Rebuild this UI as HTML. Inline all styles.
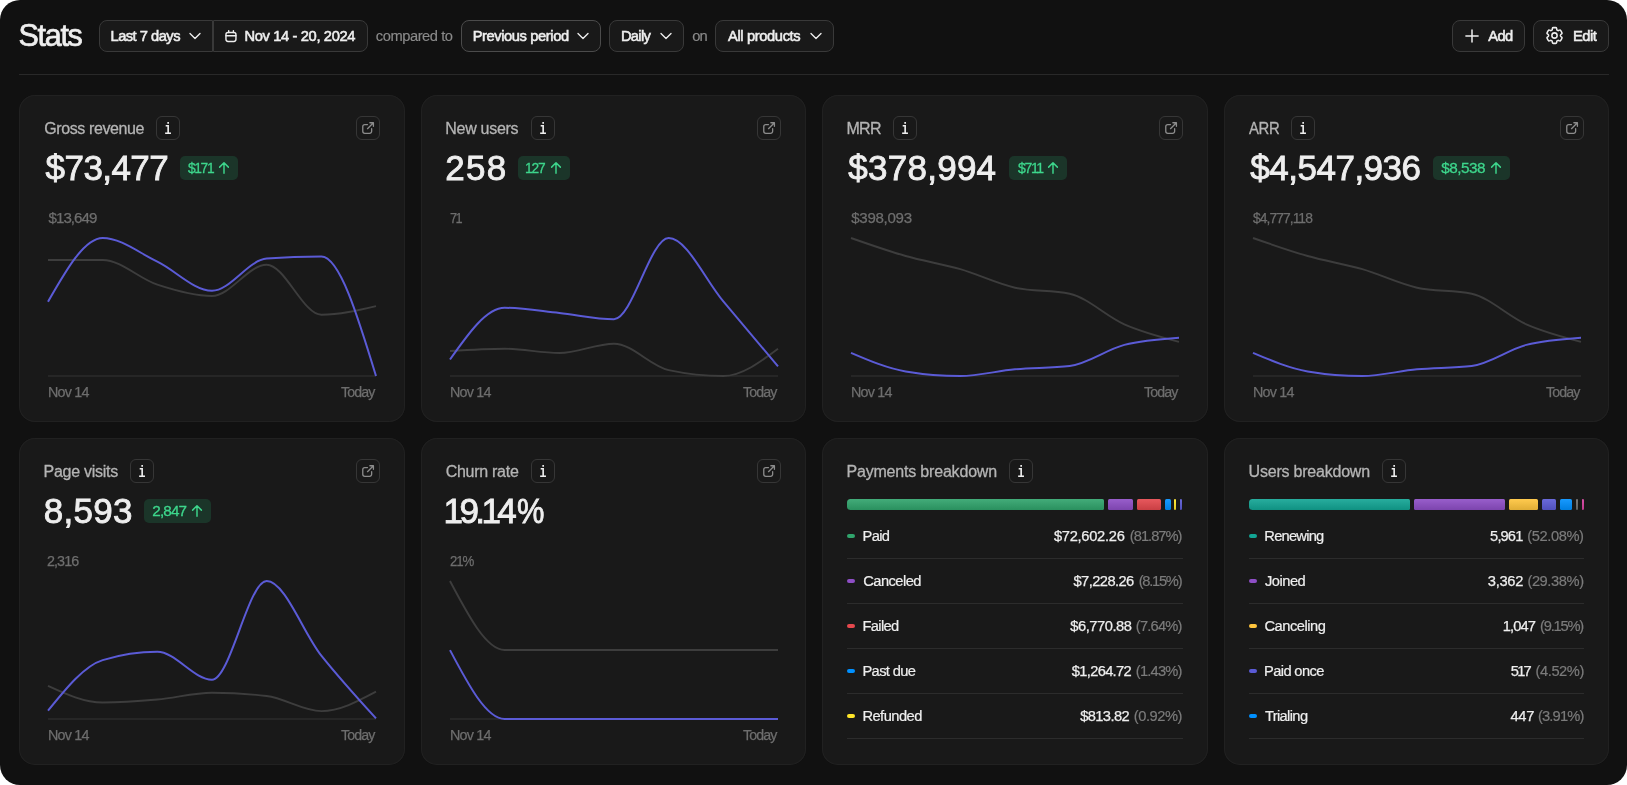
<!DOCTYPE html>
<html lang="en"><head><meta charset="utf-8"><title>Stats</title>
<style>
html,body{margin:0;padding:0;background:#fff;}
body{width:1627px;height:785px;overflow:hidden;font-family:"Liberation Sans", sans-serif;}
#app{will-change:transform;position:relative;width:1627px;height:785px;background:#111111;border-radius:20px;overflow:hidden;}
.t{position:absolute;white-space:nowrap;line-height:1;}
.i{position:absolute;overflow:visible;}
.b{position:absolute;box-sizing:border-box;background:#191919;border:1px solid #393939;}
.card{position:absolute;box-sizing:border-box;background:#191919;box-shadow:inset 0 0 0 1px #212121;border-radius:16px;}
.ib{position:absolute;box-sizing:border-box;width:24px;height:24px;border:1px solid #363636;border-radius:6px;text-align:center;}
.ib span{font-family:"Liberation Mono",monospace;font-weight:700;font-size:16px;line-height:22px;color:#eeeeee;display:block;position:relative;top:1.7px;transform:scaleX(0.72);}
.badge{position:absolute;height:24px;border-radius:5px;background:#1b3529;}
.seg{position:absolute;top:61px;height:11px;border-radius:2.5px;background-image:linear-gradient(rgba(255,255,255,.09),rgba(0,0,0,.12));}
.dot{position:absolute;left:25px;width:8px;height:4px;border-radius:2px;}
.sep{position:absolute;left:25px;right:25px;height:1px;background:#2c2c2c;}
</style></head>
<body><div id="app">
<div class="b" style="left:99px;top:20px;width:114px;height:32px;border-radius:8px 0 0 8px"></div><div class="b" style="left:213px;top:20px;width:155px;height:32px;border-radius:0 8px 8px 0"></div><svg class="i" style="left:187px;top:28px" width="16" height="16" viewBox="0 0 24 24" fill="none" stroke="#eeeeee" stroke-width="2" stroke-linecap="round" stroke-linejoin="round" ><path d="m19.5 8.25-7.5 7.5-7.5-7.5"/></svg><svg class="i" style="left:220px;top:26px" width="20" height="20" viewBox="0 0 20 20" fill="none" stroke="#eeeeee" stroke-width="1.4" stroke-linecap="round" stroke-linejoin="round" ><rect x="5.95" y="6.55" width="10" height="8.9" rx="2.1"/><path d="M8.7 4.6v2M13.4 4.6v2M5.95 9.8h10"/></svg><div class="b" style="left:461px;top:20px;width:140px;height:32px;border-radius:8px;border-color:#4b4b4b"></div><svg class="i" style="left:574.5px;top:28px" width="16" height="16" viewBox="0 0 24 24" fill="none" stroke="#eeeeee" stroke-width="2" stroke-linecap="round" stroke-linejoin="round" ><path d="m19.5 8.25-7.5 7.5-7.5-7.5"/></svg><div class="b" style="left:609px;top:20px;width:75px;height:32px;border-radius:8px"></div><svg class="i" style="left:657.5px;top:28px" width="16" height="16" viewBox="0 0 24 24" fill="none" stroke="#eeeeee" stroke-width="2" stroke-linecap="round" stroke-linejoin="round" ><path d="m19.5 8.25-7.5 7.5-7.5-7.5"/></svg><div class="b" style="left:715px;top:20px;width:119px;height:32px;border-radius:8px"></div><svg class="i" style="left:808px;top:28px" width="16" height="16" viewBox="0 0 24 24" fill="none" stroke="#eeeeee" stroke-width="2" stroke-linecap="round" stroke-linejoin="round" ><path d="m19.5 8.25-7.5 7.5-7.5-7.5"/></svg><div class="b" style="left:1452px;top:20px;width:73px;height:32px;border-radius:8px"></div><svg class="i" style="left:1461.9px;top:26px" width="20" height="20" viewBox="0 0 20 20" fill="none" stroke="#eeeeee" stroke-width="1.5" stroke-linecap="round" stroke-linejoin="round" ><path d="M3.9 10h12.2M10 3.9v12.2"/></svg><div class="b" style="left:1533px;top:20px;width:76px;height:32px;border-radius:8px"></div><svg class="i" style="left:1544.2px;top:25.0px" width="21" height="21" viewBox="0 0 24 24" fill="none" stroke="#eeeeee" stroke-width="1.75" stroke-linecap="round" stroke-linejoin="round" ><path d="M9.594 3.94c.09-.542.56-.94 1.11-.94h2.593c.55 0 1.02.398 1.11.94l.213 1.281c.063.374.313.686.645.87.074.04.147.083.22.127.325.196.72.257 1.075.124l1.217-.456a1.125 1.125 0 0 1 1.37.49l1.296 2.247a1.125 1.125 0 0 1-.26 1.431l-1.003.827c-.293.241-.438.613-.43.992a7.723 7.723 0 0 1 0 .255c-.008.378.137.75.43.991l1.004.827c.424.35.534.955.26 1.43l-1.298 2.247a1.125 1.125 0 0 1-1.369.491l-1.217-.456c-.355-.133-.75-.072-1.076.124a6.47 6.47 0 0 1-.22.128c-.331.183-.581.495-.644.869l-.213 1.281c-.09.543-.56.94-1.11.94h-2.594c-.55 0-1.019-.398-1.11-.94l-.213-1.281c-.062-.374-.312-.686-.644-.87a6.52 6.52 0 0 1-.22-.127c-.325-.196-.72-.257-1.076-.124l-1.217.456a1.125 1.125 0 0 1-1.369-.49l-1.297-2.247a1.125 1.125 0 0 1 .26-1.431l1.004-.827c.292-.24.437-.613.43-.991a6.932 6.932 0 0 1 0-.255c.007-.38-.138-.751-.43-.992l-1.004-.827a1.125 1.125 0 0 1-.26-1.43l1.297-2.247a1.125 1.125 0 0 1 1.37-.491l1.216.456c.356.133.751.072 1.076-.124.072-.044.146-.086.22-.128.332-.183.582-.495.644-.869l.214-1.28Z"/><path d="M15 12a3 3 0 1 1-6 0 3 3 0 0 1 6 0Z"/></svg><div style="position:absolute;left:19px;top:74px;width:1590px;height:1px;background:#292929"></div>
<div class="card" style="left:19px;top:95px;width:386px;height:327px"><div class="ib" style="left:137px;top:21px"><span>i</span></div><div class="ib" style="left:337px;top:21px"></div><svg class="i" style="left:341.9px;top:25.9px" width="14.2" height="14.2" viewBox="0 0 24 24" fill="none" stroke="#8c8c8c" stroke-width="2.2" stroke-linecap="round" stroke-linejoin="round" ><path d="M15 3h6v6M11 13 21 3M18 13v4.5a3.5 3.5 0 0 1-3.5 3.5h-8A3.5 3.5 0 0 1 3 17.5v-8A3.5 3.5 0 0 1 6.5 6H11"/></svg><div class="badge" style="left:161px;top:61px;width:58px"></div><svg class="i" style="left:197.97px;top:65.8px" width="14" height="14" viewBox="0 0 24 24" fill="none" stroke="#3dd68c" stroke-width="2.5" stroke-linecap="round" stroke-linejoin="round" ><path d="M4.5 10.5 12 3m0 0 7.5 7.5M12 3v18"/></svg><svg class="i" style="left:0;top:0" width="386" height="327" viewBox="0 0 386 327" fill="none"><line x1="29" y1="281" x2="357.00" y2="281" stroke="#2b2b2b" stroke-width="1.5"/><path d="M29.00,165.00C47.22,165.00,65.44,165.00,83.67,165.00C101.89,165.00,120.11,183.70,138.33,189.70C156.56,195.70,174.78,201.00,193.00,201.00C211.22,201.00,229.44,169.70,247.67,169.70C265.89,169.70,284.11,219.70,302.33,219.70C320.56,219.70,338.78,215.40,357.00,211.10" stroke="#3d3d3d" stroke-width="1.9"/><path d="M29.00,206.80C47.22,174.90,65.44,143.00,83.67,143.00C101.89,143.00,120.11,157.90,138.33,166.70C156.56,175.50,174.78,195.80,193.00,195.80C211.22,195.80,229.44,164.93,247.67,163.60C265.89,162.27,284.11,161.60,302.33,161.60C320.56,161.60,338.78,221.30,357.00,281.00" stroke="#5b5bd6" stroke-width="2"/></svg></div><div class="card" style="left:421px;top:95px;width:385px;height:327px"><div class="ib" style="left:110px;top:21px"><span>i</span></div><div class="ib" style="left:336px;top:21px"></div><svg class="i" style="left:340.9px;top:25.9px" width="14.2" height="14.2" viewBox="0 0 24 24" fill="none" stroke="#8c8c8c" stroke-width="2.2" stroke-linecap="round" stroke-linejoin="round" ><path d="M15 3h6v6M11 13 21 3M18 13v4.5a3.5 3.5 0 0 1-3.5 3.5h-8A3.5 3.5 0 0 1 3 17.5v-8A3.5 3.5 0 0 1 6.5 6H11"/></svg><div class="badge" style="left:97px;top:61px;width:52px"></div><svg class="i" style="left:127.97px;top:65.8px" width="14" height="14" viewBox="0 0 24 24" fill="none" stroke="#3dd68c" stroke-width="2.5" stroke-linecap="round" stroke-linejoin="round" ><path d="M4.5 10.5 12 3m0 0 7.5 7.5M12 3v18"/></svg><svg class="i" style="left:0;top:0" width="385" height="327" viewBox="0 0 385 327" fill="none"><line x1="29" y1="281" x2="357.00" y2="281" stroke="#2b2b2b" stroke-width="1.5"/><path d="M29.00,256.00C47.22,254.85,65.44,253.70,83.67,253.70C101.89,253.70,120.11,258.00,138.33,258.00C156.56,258.00,174.78,248.70,193.00,248.70C211.22,248.70,229.44,271.17,247.67,275.10C265.89,279.03,284.11,281.00,302.33,281.00C320.56,281.00,338.78,267.35,357.00,253.70" stroke="#3d3d3d" stroke-width="1.9"/><path d="M29.00,264.50C47.22,238.65,65.44,212.80,83.67,212.80C101.89,212.80,120.11,216.10,138.33,218.00C156.56,219.90,174.78,224.20,193.00,224.20C211.22,224.20,229.44,143.00,247.67,143.00C265.89,143.00,284.11,185.02,302.33,206.40C320.56,227.78,338.78,249.54,357.00,271.30" stroke="#5b5bd6" stroke-width="2"/></svg></div><div class="card" style="left:822px;top:95px;width:386px;height:327px"><div class="ib" style="left:71px;top:21px"><span>i</span></div><div class="ib" style="left:337px;top:21px"></div><svg class="i" style="left:341.9px;top:25.9px" width="14.2" height="14.2" viewBox="0 0 24 24" fill="none" stroke="#8c8c8c" stroke-width="2.2" stroke-linecap="round" stroke-linejoin="round" ><path d="M15 3h6v6M11 13 21 3M18 13v4.5a3.5 3.5 0 0 1-3.5 3.5h-8A3.5 3.5 0 0 1 3 17.5v-8A3.5 3.5 0 0 1 6.5 6H11"/></svg><div class="badge" style="left:187px;top:61px;width:58px"></div><svg class="i" style="left:223.97px;top:65.8px" width="14" height="14" viewBox="0 0 24 24" fill="none" stroke="#3dd68c" stroke-width="2.5" stroke-linecap="round" stroke-linejoin="round" ><path d="M4.5 10.5 12 3m0 0 7.5 7.5M12 3v18"/></svg><svg class="i" style="left:0;top:0" width="386" height="327" viewBox="0 0 386 327" fill="none"><line x1="29" y1="281" x2="357.00" y2="281" stroke="#2b2b2b" stroke-width="1.5"/><path d="M29.00,143.00C47.22,149.40,65.44,155.80,83.67,161.00C101.89,166.20,120.11,168.92,138.33,174.20C156.56,179.48,174.78,188.70,193.00,192.70C211.22,196.70,229.44,194.70,247.67,198.70C265.89,202.70,284.11,221.28,302.33,229.30C320.56,237.32,338.78,242.06,357.00,246.80" stroke="#3d3d3d" stroke-width="1.9"/><path d="M29.00,257.80C47.22,265.57,65.44,273.33,83.67,276.40C101.89,279.47,120.11,281.00,138.33,281.00C156.56,281.00,174.78,275.97,193.00,274.30C211.22,272.63,229.44,273.20,247.67,271.00C265.89,268.80,284.11,254.62,302.33,249.90C320.56,245.18,338.78,243.94,357.00,242.70" stroke="#5b5bd6" stroke-width="2"/></svg></div><div class="card" style="left:1224px;top:95px;width:385px;height:327px"><div class="ib" style="left:67px;top:21px"><span>i</span></div><div class="ib" style="left:336px;top:21px"></div><svg class="i" style="left:340.9px;top:25.9px" width="14.2" height="14.2" viewBox="0 0 24 24" fill="none" stroke="#8c8c8c" stroke-width="2.2" stroke-linecap="round" stroke-linejoin="round" ><path d="M15 3h6v6M11 13 21 3M18 13v4.5a3.5 3.5 0 0 1-3.5 3.5h-8A3.5 3.5 0 0 1 3 17.5v-8A3.5 3.5 0 0 1 6.5 6H11"/></svg><div class="badge" style="left:209px;top:61px;width:77px"></div><svg class="i" style="left:264.97px;top:65.8px" width="14" height="14" viewBox="0 0 24 24" fill="none" stroke="#3dd68c" stroke-width="2.5" stroke-linecap="round" stroke-linejoin="round" ><path d="M4.5 10.5 12 3m0 0 7.5 7.5M12 3v18"/></svg><svg class="i" style="left:0;top:0" width="385" height="327" viewBox="0 0 385 327" fill="none"><line x1="29" y1="281" x2="357.00" y2="281" stroke="#2b2b2b" stroke-width="1.5"/><path d="M29.00,143.00C47.22,149.40,65.44,155.80,83.67,161.00C101.89,166.20,120.11,168.92,138.33,174.20C156.56,179.48,174.78,188.70,193.00,192.70C211.22,196.70,229.44,194.70,247.67,198.70C265.89,202.70,284.11,221.28,302.33,229.30C320.56,237.32,338.78,242.06,357.00,246.80" stroke="#3d3d3d" stroke-width="1.9"/><path d="M29.00,257.80C47.22,265.57,65.44,273.33,83.67,276.40C101.89,279.47,120.11,281.00,138.33,281.00C156.56,281.00,174.78,275.97,193.00,274.30C211.22,272.63,229.44,273.20,247.67,271.00C265.89,268.80,284.11,254.62,302.33,249.90C320.56,245.18,338.78,243.94,357.00,242.70" stroke="#5b5bd6" stroke-width="2"/></svg></div><div class="card" style="left:19px;top:438px;width:386px;height:327px"><div class="ib" style="left:111px;top:21px"><span>i</span></div><div class="ib" style="left:337px;top:21px"></div><svg class="i" style="left:341.9px;top:25.9px" width="14.2" height="14.2" viewBox="0 0 24 24" fill="none" stroke="#8c8c8c" stroke-width="2.2" stroke-linecap="round" stroke-linejoin="round" ><path d="M15 3h6v6M11 13 21 3M18 13v4.5a3.5 3.5 0 0 1-3.5 3.5h-8A3.5 3.5 0 0 1 3 17.5v-8A3.5 3.5 0 0 1 6.5 6H11"/></svg><div class="badge" style="left:125px;top:61px;width:67px"></div><svg class="i" style="left:170.97px;top:65.8px" width="14" height="14" viewBox="0 0 24 24" fill="none" stroke="#3dd68c" stroke-width="2.5" stroke-linecap="round" stroke-linejoin="round" ><path d="M4.5 10.5 12 3m0 0 7.5 7.5M12 3v18"/></svg><svg class="i" style="left:0;top:0" width="386" height="327" viewBox="0 0 386 327" fill="none"><line x1="29" y1="281" x2="357.00" y2="281" stroke="#2b2b2b" stroke-width="1.5"/><path d="M29.00,247.80C47.22,256.15,65.44,264.50,83.67,264.50C101.89,264.50,120.11,263.13,138.33,261.50C156.56,259.87,174.78,254.70,193.00,254.70C211.22,254.70,229.44,255.80,247.67,258.00C265.89,260.20,284.11,273.10,302.33,273.10C320.56,273.10,338.78,263.40,357.00,253.70" stroke="#3d3d3d" stroke-width="1.9"/><path d="M29.00,272.70C47.22,250.17,65.44,227.63,83.67,222.10C101.89,216.57,120.11,213.80,138.33,213.80C156.56,213.80,174.78,241.70,193.00,241.70C211.22,241.70,229.44,143.00,247.67,143.00C265.89,143.00,284.11,194.70,302.33,217.60C320.56,240.50,338.78,260.45,357.00,280.40" stroke="#5b5bd6" stroke-width="2"/></svg></div><div class="card" style="left:421px;top:438px;width:385px;height:327px"><div class="ib" style="left:110px;top:21px"><span>i</span></div><div class="ib" style="left:336px;top:21px"></div><svg class="i" style="left:340.9px;top:25.9px" width="14.2" height="14.2" viewBox="0 0 24 24" fill="none" stroke="#8c8c8c" stroke-width="2.2" stroke-linecap="round" stroke-linejoin="round" ><path d="M15 3h6v6M11 13 21 3M18 13v4.5a3.5 3.5 0 0 1-3.5 3.5h-8A3.5 3.5 0 0 1 3 17.5v-8A3.5 3.5 0 0 1 6.5 6H11"/></svg><svg class="i" style="left:0;top:0" width="385" height="327" viewBox="0 0 385 327" fill="none"><line x1="29" y1="281" x2="357.00" y2="281" stroke="#2b2b2b" stroke-width="1.5"/><path d="M29.00,143.00C47.22,177.50,65.44,212.00,83.67,212.00C101.89,212.00,120.11,212.00,138.33,212.00C156.56,212.00,174.78,212.00,193.00,212.00C211.22,212.00,229.44,212.00,247.67,212.00C265.89,212.00,284.11,212.00,302.33,212.00C320.56,212.00,338.78,212.00,357.00,212.00" stroke="#3d3d3d" stroke-width="1.9"/><path d="M29.00,212.10C47.22,246.55,65.44,281.00,83.67,281.00C101.89,281.00,120.11,281.00,138.33,281.00C156.56,281.00,174.78,281.00,193.00,281.00C211.22,281.00,229.44,281.00,247.67,281.00C265.89,281.00,284.11,281.00,302.33,281.00C320.56,281.00,338.78,281.00,357.00,281.00" stroke="#5b5bd6" stroke-width="2"/></svg></div><div class="card" style="left:822px;top:438px;width:386px;height:327px"><div class="ib" style="left:187px;top:21px"><span>i</span></div><div class="seg" style="left:25px;width:257px;background-color:#30a46c;border-radius:3.5px 1.5px 1.5px 3.5px"></div><div class="seg" style="left:286px;width:25px;background-color:#8e4ec6;border-radius:1.5px"></div><div class="seg" style="left:315px;width:24px;background-color:#e5484d;border-radius:1.5px"></div><div class="seg" style="left:343px;width:5.5px;background-color:#0090ff;border-radius:1.5px"></div><div class="seg" style="left:351.5px;width:2.5px;background-color:#ffe629;border-radius:1.5px"></div><div class="seg" style="left:357.5px;width:2.5px;background-color:#5b5bd6;border-radius:1.5px 3px 3px 1.5px"></div><div class="dot" style="top:96px;background:#30a46c"></div><div class="sep" style="top:120px"></div><div class="dot" style="top:141px;background:#8e4ec6"></div><div class="sep" style="top:165px"></div><div class="dot" style="top:186px;background:#e5484d"></div><div class="sep" style="top:210px"></div><div class="dot" style="top:231px;background:#0090ff"></div><div class="sep" style="top:255px"></div><div class="dot" style="top:276px;background:#ffe629"></div><div class="sep" style="top:300px"></div></div><div class="card" style="left:1224px;top:438px;width:385px;height:327px"><div class="ib" style="left:158px;top:21px"><span>i</span></div><div class="seg" style="left:25px;width:161px;background-color:#12a594;border-radius:3.5px 1.5px 1.5px 3.5px"></div><div class="seg" style="left:190px;width:91px;background-color:#8e4ec6;border-radius:1.5px"></div><div class="seg" style="left:285px;width:29px;background-color:#ffc53d;border-radius:1.5px"></div><div class="seg" style="left:318px;width:14px;background-color:#5b5bd6;border-radius:1.5px"></div><div class="seg" style="left:336px;width:12px;background-color:#0090ff;border-radius:1.5px"></div><div class="seg" style="left:351.5px;width:2.5px;background-color:#6e6e6e;border-radius:1.5px"></div><div class="seg" style="left:357.5px;width:2.5px;background-color:#d6409f;border-radius:1.5px 3px 3px 1.5px"></div><div class="dot" style="top:96px;background:#12a594"></div><div class="sep" style="top:120px"></div><div class="dot" style="top:141px;background:#8e4ec6"></div><div class="sep" style="top:165px"></div><div class="dot" style="top:186px;background:#ffc53d"></div><div class="sep" style="top:210px"></div><div class="dot" style="top:231px;background:#5b5bd6"></div><div class="sep" style="top:255px"></div><div class="dot" style="top:276px;background:#0090ff"></div><div class="sep" style="top:300px"></div></div>
<div class="t" id="stats" style="left:18.57px;top:20px;font-size:30.5px;color:#eeeeee;letter-spacing:-1.302px;-webkit-text-stroke:0.7px #eeeeee;">Stats</div>
<div class="t" id="h_last" style="left:110.47px;top:29px;font-size:14.7px;color:#eeeeee;letter-spacing:-0.510px;-webkit-text-stroke:0.55px #eeeeee;">Last 7 days</div>
<div class="t" id="h_date" style="left:244.60px;top:29px;font-size:14.7px;color:#eeeeee;letter-spacing:-0.373px;-webkit-text-stroke:0.55px #eeeeee;">Nov 14 - 20, 2024</div>
<div class="t" id="h_cmp" style="left:375.87px;top:29px;font-size:14.7px;color:#8a8a8a;letter-spacing:-0.458px;-webkit-text-stroke:0.15px #8a8a8a;">compared to</div>
<div class="t" id="h_prev" style="left:472.64px;top:29px;font-size:14.7px;color:#eeeeee;letter-spacing:-0.400px;-webkit-text-stroke:0.55px #eeeeee;">Previous period</div>
<div class="t" id="h_daily" style="left:620.91px;top:29px;font-size:14.7px;color:#eeeeee;letter-spacing:-0.662px;-webkit-text-stroke:0.55px #eeeeee;">Daily</div>
<div class="t" id="h_on" style="left:692.25px;top:29px;font-size:14.7px;color:#8a8a8a;letter-spacing:-0.951px;-webkit-text-stroke:0.15px #8a8a8a;">on</div>
<div class="t" id="h_all" style="left:727.98px;top:29px;font-size:14.7px;color:#eeeeee;letter-spacing:-0.368px;-webkit-text-stroke:0.55px #eeeeee;">All products</div>
<div class="t" id="h_add" style="left:1488.37px;top:29px;font-size:14.7px;color:#eeeeee;letter-spacing:-0.617px;-webkit-text-stroke:0.55px #eeeeee;">Add</div>
<div class="t" id="h_edit" style="left:1572.90px;top:29px;font-size:14.7px;color:#eeeeee;letter-spacing:-0.418px;-webkit-text-stroke:0.55px #eeeeee;">Edit</div>
<div class="t" id="t1" style="left:44.23px;top:121px;font-size:16px;color:#b4b4b4;letter-spacing:-0.387px;-webkit-text-stroke:0.3px #b4b4b4;">Gross revenue</div>
<div class="t" id="v1" style="left:45.61px;top:150px;font-size:35px;color:#eeeeee;letter-spacing:-0.570px;-webkit-text-stroke:0.85px #eeeeee;">$73,477</div>
<div class="t" id="b1" style="left:188.48px;top:160px;font-size:15.3px;color:#3dd68c;letter-spacing:-1.516px;-webkit-text-stroke:0.3px #3dd68c;transform:scaleX(0.9);transform-origin:0 50%;">$171</div>
<div class="t" id="y1" style="left:48.52px;top:210px;font-size:15.1px;color:#6e6e6e;letter-spacing:-0.962px;-webkit-text-stroke:0.25px #6e6e6e;">$13,649</div>
<div class="t" id="n1" style="left:47.59px;top:384px;font-size:15.1px;color:#6e6e6e;letter-spacing:-0.857px;-webkit-text-stroke:0.25px #6e6e6e;transform:scaleX(0.95);transform-origin:0 50%;">Nov 14</div>
<div class="t" id="d1" style="left:340.65px;top:384px;font-size:15.1px;color:#6e6e6e;letter-spacing:-0.918px;-webkit-text-stroke:0.25px #6e6e6e;transform:scaleX(0.94);transform-origin:0 50%;">Today</div>
<div class="t" id="t2" style="left:445.29px;top:121px;font-size:16px;color:#b4b4b4;letter-spacing:-0.285px;-webkit-text-stroke:0.3px #b4b4b4;">New users</div>
<div class="t" id="v2" style="left:445.13px;top:150px;font-size:35px;color:#eeeeee;letter-spacing:1.338px;-webkit-text-stroke:0.85px #eeeeee;">258</div>
<div class="t" id="b2" style="left:525.49px;top:160px;font-size:15.3px;color:#3dd68c;letter-spacing:-1.329px;-webkit-text-stroke:0.3px #3dd68c;transform:scaleX(0.9);transform-origin:0 50%;">127</div>
<div class="t" id="y2" style="left:450.28px;top:210px;font-size:15.1px;color:#6e6e6e;letter-spacing:-1.981px;-webkit-text-stroke:0.25px #6e6e6e;transform:scaleX(0.84);transform-origin:0 50%;">71</div>
<div class="t" id="n2" style="left:449.59px;top:384px;font-size:15.1px;color:#6e6e6e;letter-spacing:-0.857px;-webkit-text-stroke:0.25px #6e6e6e;transform:scaleX(0.95);transform-origin:0 50%;">Nov 14</div>
<div class="t" id="d2" style="left:742.64px;top:384px;font-size:15.1px;color:#6e6e6e;letter-spacing:-0.918px;-webkit-text-stroke:0.25px #6e6e6e;transform:scaleX(0.94);transform-origin:0 50%;">Today</div>
<div class="t" id="t3" style="left:846.49px;top:121px;font-size:16px;color:#b4b4b4;letter-spacing:-0.704px;-webkit-text-stroke:0.3px #b4b4b4;">MRR</div>
<div class="t" id="v3" style="left:848.33px;top:150px;font-size:35px;color:#eeeeee;letter-spacing:0.250px;-webkit-text-stroke:0.85px #eeeeee;">$378,994</div>
<div class="t" id="b3" style="left:1017.76px;top:160px;font-size:15.3px;color:#3dd68c;letter-spacing:-1.481px;-webkit-text-stroke:0.3px #3dd68c;transform:scaleX(0.92);transform-origin:0 50%;">$711</div>
<div class="t" id="y3" style="left:851.19px;top:210px;font-size:15.1px;color:#6e6e6e;letter-spacing:-0.297px;-webkit-text-stroke:0.25px #6e6e6e;">$398,093</div>
<div class="t" id="n3" style="left:850.59px;top:384px;font-size:15.1px;color:#6e6e6e;letter-spacing:-0.857px;-webkit-text-stroke:0.25px #6e6e6e;transform:scaleX(0.95);transform-origin:0 50%;">Nov 14</div>
<div class="t" id="d3" style="left:1143.54px;top:384px;font-size:15.1px;color:#6e6e6e;letter-spacing:-0.918px;-webkit-text-stroke:0.25px #6e6e6e;transform:scaleX(0.94);transform-origin:0 50%;">Today</div>
<div class="t" id="t4" style="left:1248.81px;top:121px;font-size:16px;color:#b4b4b4;letter-spacing:-0.357px;-webkit-text-stroke:0.3px #b4b4b4;transform:scaleX(0.93);transform-origin:0 50%;">ARR</div>
<div class="t" id="v4" style="left:1250.33px;top:150px;font-size:35px;color:#eeeeee;letter-spacing:-0.498px;-webkit-text-stroke:0.85px #eeeeee;">$4,547,936</div>
<div class="t" id="b4" style="left:1441.30px;top:160px;font-size:15.3px;color:#3dd68c;letter-spacing:-0.508px;-webkit-text-stroke:0.3px #3dd68c;">$8,538</div>
<div class="t" id="y4" style="left:1252.90px;top:210px;font-size:15.1px;color:#6e6e6e;letter-spacing:-1.040px;-webkit-text-stroke:0.25px #6e6e6e;transform:scaleX(0.92);transform-origin:0 50%;">$4,777,118</div>
<div class="t" id="n4" style="left:1252.59px;top:384px;font-size:15.1px;color:#6e6e6e;letter-spacing:-0.857px;-webkit-text-stroke:0.25px #6e6e6e;transform:scaleX(0.95);transform-origin:0 50%;">Nov 14</div>
<div class="t" id="d4" style="left:1545.58px;top:384px;font-size:15.1px;color:#6e6e6e;letter-spacing:-0.918px;-webkit-text-stroke:0.25px #6e6e6e;transform:scaleX(0.94);transform-origin:0 50%;">Today</div>
<div class="t" id="t5" style="left:43.49px;top:464px;font-size:16px;color:#b4b4b4;letter-spacing:-0.267px;-webkit-text-stroke:0.3px #b4b4b4;">Page visits</div>
<div class="t" id="v5" style="left:43.83px;top:493px;font-size:35px;color:#eeeeee;letter-spacing:0.233px;-webkit-text-stroke:0.85px #eeeeee;">8,593</div>
<div class="t" id="b5" style="left:152.27px;top:503px;font-size:15.3px;color:#3dd68c;letter-spacing:-0.881px;-webkit-text-stroke:0.3px #3dd68c;">2,847</div>
<div class="t" id="y5" style="left:47.48px;top:553px;font-size:15.1px;color:#6e6e6e;letter-spacing:-0.981px;-webkit-text-stroke:0.25px #6e6e6e;transform:scaleX(0.95);transform-origin:0 50%;">2,316</div>
<div class="t" id="n5" style="left:47.59px;top:727px;font-size:15.1px;color:#6e6e6e;letter-spacing:-0.857px;-webkit-text-stroke:0.25px #6e6e6e;transform:scaleX(0.95);transform-origin:0 50%;">Nov 14</div>
<div class="t" id="d5" style="left:340.65px;top:727px;font-size:15.1px;color:#6e6e6e;letter-spacing:-0.918px;-webkit-text-stroke:0.25px #6e6e6e;transform:scaleX(0.94);transform-origin:0 50%;">Today</div>
<div class="t" id="t6" style="left:445.73px;top:464px;font-size:16px;color:#b4b4b4;letter-spacing:-0.279px;-webkit-text-stroke:0.3px #b4b4b4;">Churn rate</div>
<div class="t" id="v6" style="left:443.60px;top:493px;font-size:35px;color:#eeeeee;letter-spacing:0.000px;-webkit-text-stroke:0.85px #eeeeee;"><span style="letter-spacing:-3.6px">19.14</span><span style="display:inline-block;margin-left:3.8px;transform:scaleX(0.88);transform-origin:0 50%">%</span></div>
<div class="t" id="y6" style="left:450.49px;top:553px;font-size:15.1px;color:#6e6e6e;letter-spacing:-1.230px;-webkit-text-stroke:0.25px #6e6e6e;transform:scaleX(0.88);transform-origin:0 50%;">21%</div>
<div class="t" id="n6" style="left:449.59px;top:727px;font-size:15.1px;color:#6e6e6e;letter-spacing:-0.857px;-webkit-text-stroke:0.25px #6e6e6e;transform:scaleX(0.95);transform-origin:0 50%;">Nov 14</div>
<div class="t" id="d6" style="left:742.64px;top:727px;font-size:15.1px;color:#6e6e6e;letter-spacing:-0.918px;-webkit-text-stroke:0.25px #6e6e6e;transform:scaleX(0.94);transform-origin:0 50%;">Today</div>
<div class="t" id="t7" style="left:846.45px;top:464px;font-size:16px;color:#b4b4b4;letter-spacing:-0.187px;-webkit-text-stroke:0.3px #b4b4b4;">Payments breakdown</div>
<div class="t" id="r7n0" style="left:862.61px;top:529px;font-size:14.7px;color:#eeeeee;letter-spacing:-0.685px;-webkit-text-stroke:0.2px #eeeeee;">Paid</div>
<div class="t" id="r7v0" style="left:1053.88px;top:529px;font-size:14.7px;color:#eeeeee;letter-spacing:-0.287px;-webkit-text-stroke:0.25px #eeeeee;">$72,602.26</div>
<div class="t" id="r7p0" style="left:1129.83px;top:529px;font-size:14.7px;color:#7b7b7b;letter-spacing:-0.988px;-webkit-text-stroke:0.2px #7b7b7b;">(81.87%)</div>
<div class="t" id="r7n1" style="left:863.25px;top:574px;font-size:14.7px;color:#eeeeee;letter-spacing:-0.556px;-webkit-text-stroke:0.2px #eeeeee;">Canceled</div>
<div class="t" id="r7v1" style="left:1073.48px;top:574px;font-size:14.7px;color:#eeeeee;letter-spacing:-0.568px;-webkit-text-stroke:0.25px #eeeeee;">$7,228.26</div>
<div class="t" id="r7p1" style="left:1138.63px;top:574px;font-size:14.7px;color:#7b7b7b;letter-spacing:-1.246px;-webkit-text-stroke:0.2px #7b7b7b;">(8.15%)</div>
<div class="t" id="r7n2" style="left:862.44px;top:619px;font-size:14.7px;color:#eeeeee;letter-spacing:-0.640px;-webkit-text-stroke:0.2px #eeeeee;">Failed</div>
<div class="t" id="r7v2" style="left:1070.32px;top:619px;font-size:14.7px;color:#eeeeee;letter-spacing:-0.473px;-webkit-text-stroke:0.25px #eeeeee;">$6,770.88</div>
<div class="t" id="r7p2" style="left:1135.85px;top:619px;font-size:14.7px;color:#7b7b7b;letter-spacing:-0.801px;-webkit-text-stroke:0.2px #7b7b7b;">(7.64%)</div>
<div class="t" id="r7n3" style="left:862.44px;top:664px;font-size:14.7px;color:#eeeeee;letter-spacing:-0.627px;-webkit-text-stroke:0.2px #eeeeee;">Past due</div>
<div class="t" id="r7v3" style="left:1071.85px;top:664px;font-size:14.7px;color:#eeeeee;letter-spacing:-0.691px;-webkit-text-stroke:0.25px #eeeeee;">$1,264.72</div>
<div class="t" id="r7p3" style="left:1135.85px;top:664px;font-size:14.7px;color:#7b7b7b;letter-spacing:-0.800px;-webkit-text-stroke:0.2px #7b7b7b;">(1.43%)</div>
<div class="t" id="r7n4" style="left:862.44px;top:709px;font-size:14.7px;color:#eeeeee;letter-spacing:-0.547px;-webkit-text-stroke:0.2px #eeeeee;">Refunded</div>
<div class="t" id="r7v4" style="left:1080.13px;top:709px;font-size:14.7px;color:#eeeeee;letter-spacing:-0.588px;-webkit-text-stroke:0.25px #eeeeee;">$813.82</div>
<div class="t" id="r7p4" style="left:1133.85px;top:709px;font-size:14.7px;color:#7b7b7b;letter-spacing:-0.460px;-webkit-text-stroke:0.2px #7b7b7b;">(0.92%)</div>
<div class="t" id="t8" style="left:1248.61px;top:464px;font-size:16px;color:#b4b4b4;letter-spacing:-0.214px;-webkit-text-stroke:0.3px #b4b4b4;">Users breakdown</div>
<div class="t" id="r8n0" style="left:1264.37px;top:529px;font-size:14.7px;color:#eeeeee;letter-spacing:-0.784px;-webkit-text-stroke:0.2px #eeeeee;">Renewing</div>
<div class="t" id="r8v0" style="left:1490.10px;top:529px;font-size:14.7px;color:#eeeeee;letter-spacing:-0.884px;-webkit-text-stroke:0.25px #eeeeee;">5,961</div>
<div class="t" id="r8p0" style="left:1527.35px;top:529px;font-size:14.7px;color:#7b7b7b;letter-spacing:-0.425px;-webkit-text-stroke:0.2px #7b7b7b;">(52.08%)</div>
<div class="t" id="r8n1" style="left:1265.06px;top:574px;font-size:14.7px;color:#eeeeee;letter-spacing:-0.517px;-webkit-text-stroke:0.2px #eeeeee;">Joined</div>
<div class="t" id="r8v1" style="left:1487.83px;top:574px;font-size:14.7px;color:#eeeeee;letter-spacing:-0.316px;-webkit-text-stroke:0.25px #eeeeee;">3,362</div>
<div class="t" id="r8p1" style="left:1527.41px;top:574px;font-size:14.7px;color:#7b7b7b;letter-spacing:-0.422px;-webkit-text-stroke:0.2px #7b7b7b;">(29.38%)</div>
<div class="t" id="r8n2" style="left:1264.42px;top:619px;font-size:14.7px;color:#eeeeee;letter-spacing:-0.484px;-webkit-text-stroke:0.2px #eeeeee;">Canceling</div>
<div class="t" id="r8v2" style="left:1502.83px;top:619px;font-size:14.7px;color:#eeeeee;letter-spacing:-0.930px;-webkit-text-stroke:0.25px #eeeeee;">1,047</div>
<div class="t" id="r8p2" style="left:1540.06px;top:619px;font-size:14.7px;color:#7b7b7b;letter-spacing:-1.214px;-webkit-text-stroke:0.2px #7b7b7b;">(9.15%)</div>
<div class="t" id="r8n3" style="left:1264.10px;top:664px;font-size:14.7px;color:#eeeeee;letter-spacing:-0.640px;-webkit-text-stroke:0.2px #eeeeee;">Paid once</div>
<div class="t" id="r8v3" style="left:1510.73px;top:664px;font-size:14.7px;color:#eeeeee;letter-spacing:-1.724px;-webkit-text-stroke:0.25px #eeeeee;">517</div>
<div class="t" id="r8p3" style="left:1535.60px;top:664px;font-size:14.7px;color:#7b7b7b;letter-spacing:-0.445px;-webkit-text-stroke:0.2px #7b7b7b;">(4.52%)</div>
<div class="t" id="r8n4" style="left:1264.89px;top:709px;font-size:14.7px;color:#eeeeee;letter-spacing:-0.630px;-webkit-text-stroke:0.2px #eeeeee;">Trialing</div>
<div class="t" id="r8v4" style="left:1510.38px;top:709px;font-size:14.7px;color:#eeeeee;letter-spacing:-0.287px;-webkit-text-stroke:0.25px #eeeeee;">447</div>
<div class="t" id="r8p4" style="left:1538.00px;top:709px;font-size:14.7px;color:#7b7b7b;letter-spacing:-0.850px;-webkit-text-stroke:0.2px #7b7b7b;">(3.91%)</div>
</div></body></html>
